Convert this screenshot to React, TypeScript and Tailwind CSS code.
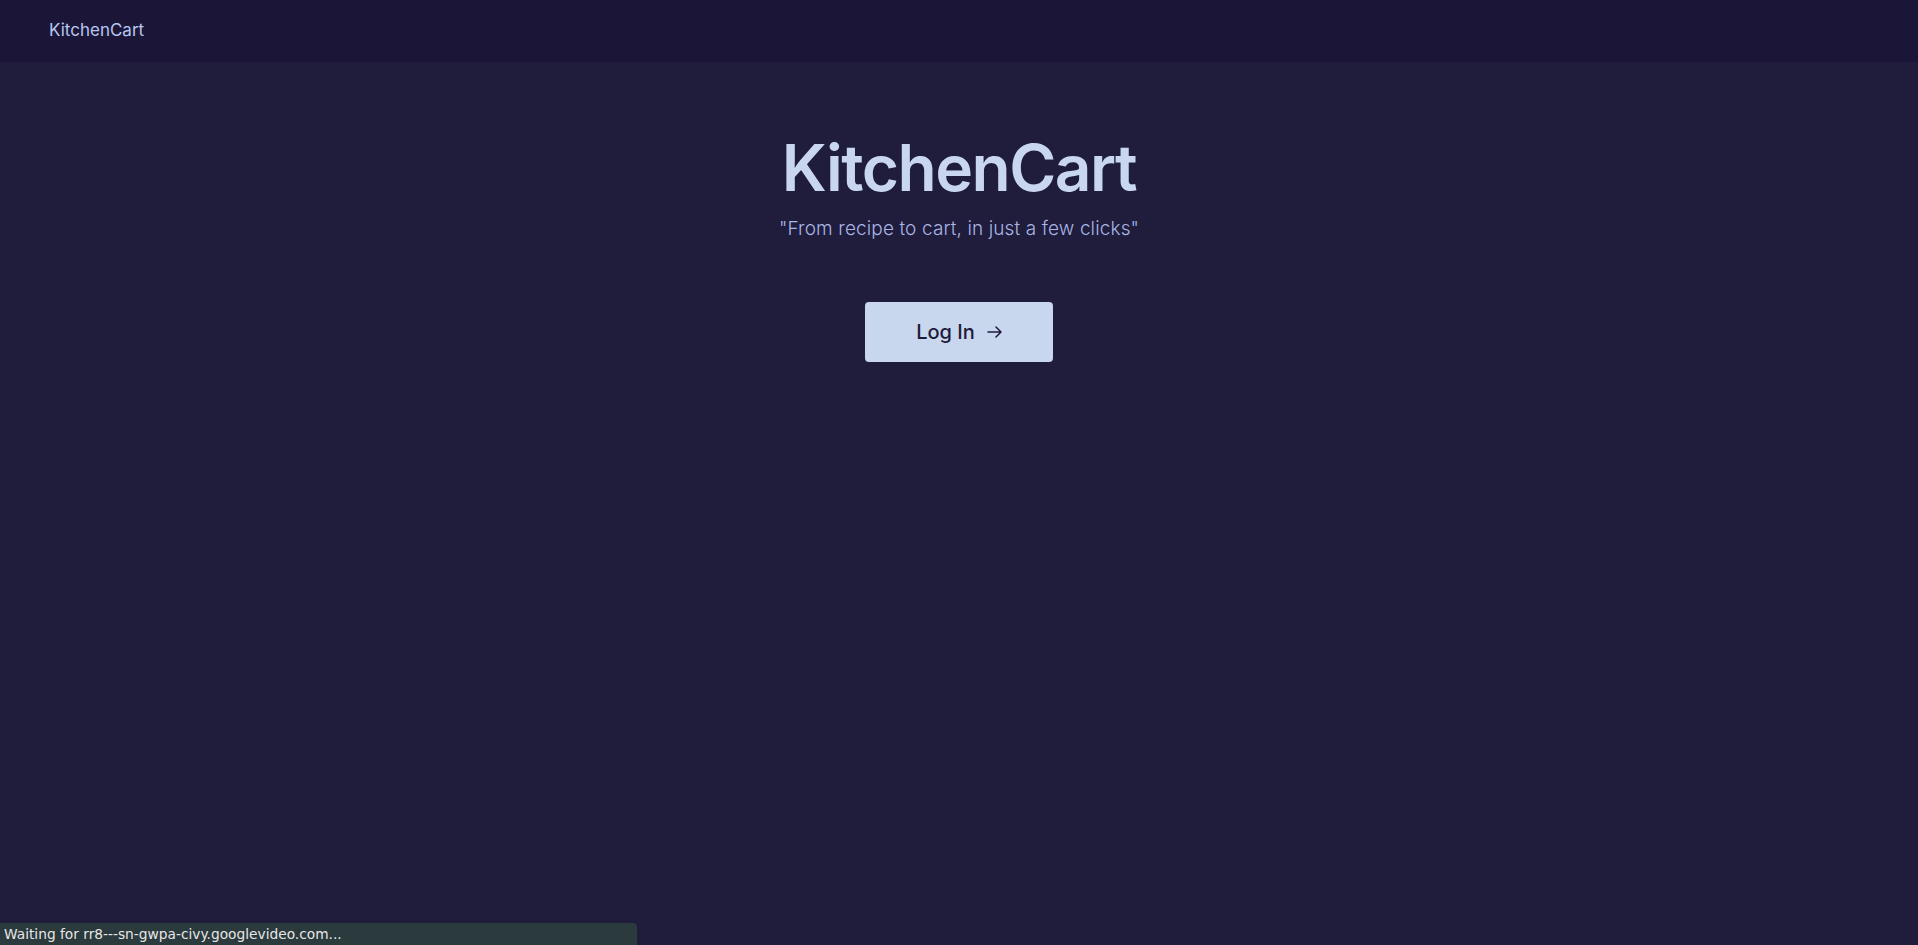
import React from "react";

export default function App() {
  return (
    <div className="relative min-h-[945px] w-full bg-[#1f1c3c] font-['Inter','Noto_Sans',sans-serif]">
      <header className="flex h-[62px] items-center bg-[#1b1638] pl-[49px]">
        <span className="text-[17px] text-[#b9c5ee]">KitchenCart</span>
      </header>
      <main className="flex flex-col items-center pt-[66px]">
        <h1 className="text-[64px] leading-[80px] font-semibold text-[#c8d6ee] tracking-[-1.5px]">KitchenCart</h1>
        <p className="mt-[7px] text-[19px] font-light text-[#a9b5e4] tracking-[0.12px]">"From recipe to cart, in just a few clicks"</p>
        <button className="mt-[58px] flex h-[60px] w-[188px] items-center justify-center gap-[12px] rounded-[4px] bg-[#c8d6ee] text-[20px] font-medium text-[#1e1b3a]">
          <span>Log In</span>
          <svg width="15" height="12" viewBox="0 0 15 12" fill="none" stroke="#1e1b3a" strokeWidth="1.5" strokeLinecap="round" strokeLinejoin="round">
            <path d="M1 6h13M9 1l5 5-5 5" />
          </svg>
        </button>
      </main>
      <div className="absolute bottom-0 left-0 flex h-[22px] w-[637px] items-center rounded-tr-[4px] bg-[#2b3a3d] pl-[4px] font-['DejaVu_Sans',sans-serif] text-[13.75px] text-[#e6e6e6]">
        Waiting for rr8---sn-gwpa-civy.googlevideo.com...
      </div>
    </div>
  );
}
